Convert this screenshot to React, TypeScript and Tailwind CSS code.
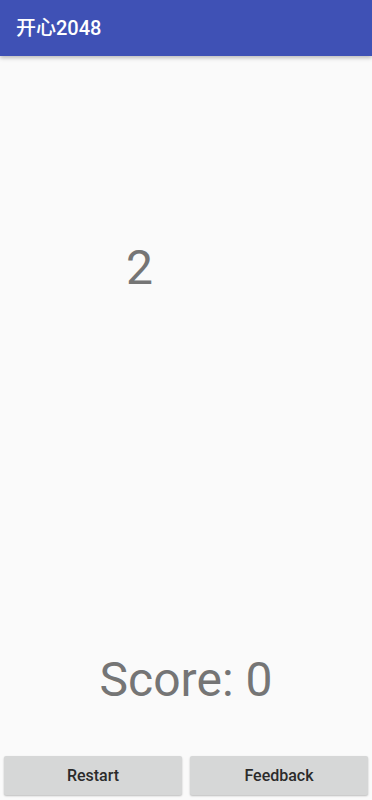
export default function App() {
  const cells = Array.from({ length: 16 }, (_, i) => (i === 5 ? 2 : 0))

  return (
    <div
      className="h-[800px] w-full flex flex-col bg-[#fafafa] overflow-hidden"
      style={{ fontFamily: 'Roboto, "Noto Sans CJK SC", sans-serif' }}
    >
      <header className="h-14 shrink-0 bg-[#3f51b5] flex items-center px-4 shadow-[0_2px_4px_rgba(0,0,0,0.25)] z-10">
        <h1 className="text-white text-[20px] font-medium leading-none">开心2048</h1>
      </header>

      <div className="grid grid-cols-4 grid-rows-4 h-[564px]">
        {cells.map((v, i) => (
          <div key={i} className="flex items-center justify-center text-[48px] leading-none text-[#757575]">
            {v ? v : ""}
          </div>
        ))}
      </div>

      <div className="mt-[36px] text-center text-[48px] leading-[48px] text-[#757575]">Score: 0</div>

      <div className="mt-auto flex gap-2 px-1 pb-[5px]">
        <button className="flex-1 h-[39px] bg-[#d6d7d7] rounded-[2px] shadow-[0_1px_2px_rgba(0,0,0,0.25)] text-[16px] font-medium text-[#2b2b2b]">
          Restart
        </button>
        <button className="flex-1 h-[39px] bg-[#d6d7d7] rounded-[2px] shadow-[0_1px_2px_rgba(0,0,0,0.25)] text-[16px] font-medium text-[#2b2b2b]">
          Feedback
        </button>
      </div>
    </div>
  )
}
